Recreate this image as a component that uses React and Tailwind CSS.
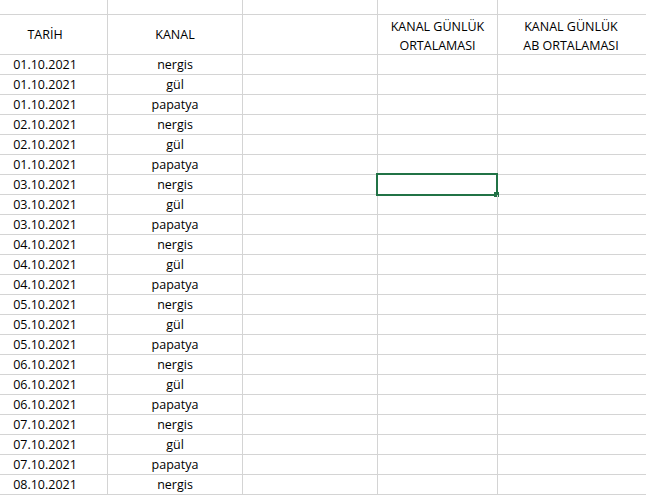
const rows = [
  ['01.10.2021', 'nergis'],
  ['01.10.2021', 'gül'],
  ['01.10.2021', 'papatya'],
  ['02.10.2021', 'nergis'],
  ['02.10.2021', 'gül'],
  ['01.10.2021', 'papatya'],
  ['03.10.2021', 'nergis'],
  ['03.10.2021', 'gül'],
  ['03.10.2021', 'papatya'],
  ['04.10.2021', 'nergis'],
  ['04.10.2021', 'gül'],
  ['04.10.2021', 'papatya'],
  ['05.10.2021', 'nergis'],
  ['05.10.2021', 'gül'],
  ['05.10.2021', 'papatya'],
  ['06.10.2021', 'nergis'],
  ['06.10.2021', 'gül'],
  ['06.10.2021', 'papatya'],
  ['07.10.2021', 'nergis'],
  ['07.10.2021', 'gül'],
  ['07.10.2021', 'papatya'],
  ['08.10.2021', 'nergis'],
]

const cell = 'border-r border-b border-[#d4d4d4] flex items-center justify-center pt-[2px]'
const lastCell = 'border-b border-[#d4d4d4] flex items-center justify-center pt-[2px]'

export default function App() {
  return (
    <div
      className="w-[646px] h-[495px] overflow-hidden bg-white text-black text-[12.5px]"
      style={{ fontFamily: '"Open Sans", "Liberation Sans", sans-serif' }}
    >
      <div className="grid grid-cols-[108px_135px_135px_120px_148px] grid-rows-[15px_40px] auto-rows-[20px]">
        {/* empty top row */}
        <div className={cell} />
        <div className={cell} />
        <div className={cell} />
        <div className={cell} />
        <div className={lastCell} />

        {/* header row */}
        <div className={`${cell} pr-[17px]`}>TARİH</div>
        <div className={cell}>KANAL</div>
        <div className={cell} />
        <div className={`${cell} text-center leading-[19px]`}>
          KANAL GÜNLÜK
          <br />
          ORTALAMASI
        </div>
        <div className={`${lastCell} text-center leading-[19px] pr-[2px]`}>
          KANAL GÜNLÜK
          <br />
          AB ORTALAMASI
        </div>

        {rows.map(([date, kanal], i) => (
          <div key={i} className="contents">
            <div className={`${cell} pr-[17px]`}>{date}</div>
            <div className={cell}>{kanal}</div>
            <div className={cell} />
            <div className={`${cell} relative`}>
              {i === 6 && (
                <>
                  <div className="absolute -left-[2px] -top-[2px] w-[122px] h-[23px] border-2 border-[#217346]" />
                  <div className="absolute left-[116px] top-[17px] w-[5px] h-[5px] bg-[#217346]" />
                </>
              )}
            </div>
            <div className={lastCell} />
          </div>
        ))}
      </div>
    </div>
  )
}
